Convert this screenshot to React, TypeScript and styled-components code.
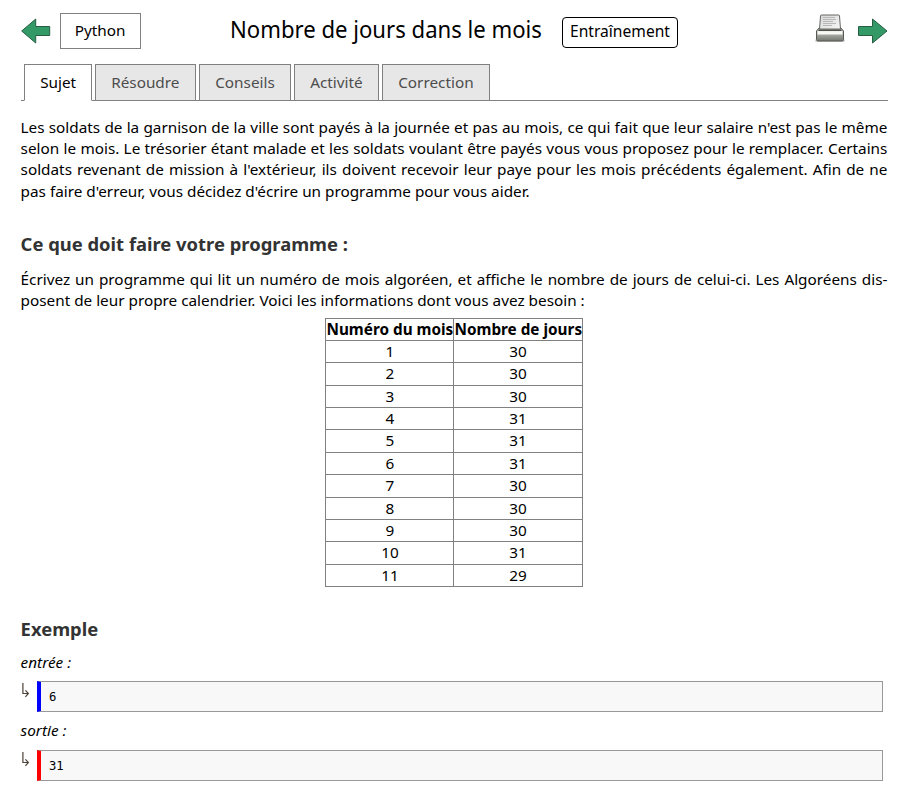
import React from "react";
import styled, { createGlobalStyle } from "styled-components";

const GlobalStyle = createGlobalStyle`
  * { box-sizing: border-box; }
  body {
    margin: 0;
    background: #fff;
    color: #000;
    font: 15.3px/21.32px "Noto Sans", "Open Sans", sans-serif;
  }
`;

const Page = styled.main`
  width: 907px;
  height: 786px;
  padding: 13px 19.6px 0 20.6px;
  overflow: hidden;
`;

const Header = styled.header`
  display: flex;
  align-items: flex-start;
  height: 51px;
`;

const ArrowLink = styled.a`
  display: block;
  width: 30px;
  height: 26px;
  margin-top: 5px;
  svg { display: block; }
`;

const Language = styled.div`
  width: 81px;
  height: 36px;
  margin-left: 9px;
  border: 1px solid #808080;
  line-height: 33px;
  text-align: center;
`;

const Title = styled.h1`
  width: 314px;
  margin: 0 0 0 89px;
  font-size: 24px;
  font-weight: 400;
  line-height: 31px;
  white-space: nowrap;
  span {
    display: inline-block;
    transform: scaleX(0.922);
    transform-origin: 0 50%;
  }
`;

const Badge = styled.div`
  width: 116px;
  height: 31px;
  margin: 4px 0 0 18px;
  border: 1px solid #000;
  border-radius: 4px;
  font-size: 16px;
  line-height: 27px;
  padding-left: 7.5px;
  white-space: nowrap;
  span {
    display: inline-block;
    transform: scaleX(0.975);
    transform-origin: 0 50%;
  }
`;

const Actions = styled.div`
  display: flex;
  gap: 13px;
  margin-left: auto;
  margin-right: -0.6px;
`;

const PrinterIcon = styled.svg`
  display: block;
`;

const Tabs = styled.nav`
  display: flex;
  gap: 3px;
  height: 37px;
  padding-left: 3px;
  width: 867px;
  box-shadow: inset 0 -1px #808080;
`;

const Tab = styled.a<{ $active?: boolean; $width: number }>`
  width: ${(p) => p.$width}px;
  height: 37px;
  border: 1px solid #808080;
  border-bottom-color: ${(p) => (p.$active ? "#fff" : "#808080")};
  background: ${(p) => (p.$active ? "#fff" : "#e7e7e7")};
  color: ${(p) => (p.$active ? "#000" : "#4d4d4d")};
  line-height: 35px;
  padding-left: 15.6px;
  white-space: nowrap;
`;

const Paragraph = styled.p`
  margin: 0;
  text-align: justify;
  hyphens: manual;
`;

const Intro = styled(Paragraph)`
  margin-top: 15.6px;
`;

const Heading = styled.h2<{ $top: number; $bottom: number }>`
  margin: ${(p) => p.$top}px 0 ${(p) => p.$bottom}px;
  color: #333;
  font-size: 18.4px;
  font-weight: 700;
  line-height: 26px;
`;

const Table = styled.table`
  margin: 6.2px auto 0;
  width: 257.4px;
  border-collapse: collapse;
  table-layout: fixed;
  th, td {
    height: 22.36px;
    padding: 0;
    border: 1px solid #808080;
    text-align: center;
    line-height: 21.32px;
    white-space: nowrap;
  }
`;

const Label = styled.div<{ $top: number }>`
  margin-top: ${(p) => p.$top}px;
  font-style: italic;
  line-height: 21px;
`;

const Sample = styled.div<{ $top: number }>`
  display: flex;
  margin-top: ${(p) => p.$top}px;
  padding-right: 4.4px;
`;

const Hook = styled.span`
  width: 16px;
  height: 31px;
  svg { display: block; }
`;

const Code = styled.pre<{ $color: string }>`
  flex: 1;
  height: 31px;
  margin: 0;
  padding-left: 8.4px;
  border: 1px solid #999;
  border-left: 4px solid ${(p) => p.$color};
  background: #f8f8f8;
  font: 12.24px/31px "DejaVu Sans Mono", monospace;
`;

const Arrow = ({ right }: { right?: boolean }) => (
  <svg width="30" height="26" viewBox="0 0 30 26">
    <path
      d={right ? "M.5 8.5h14V1L29 13 14.5 25v-7.5H.5z" : "M28.7 8.5H14.7V1L.7 13l14 12v-7.5h14z"}
      fill="#339966"
      stroke="#285d43"
      strokeWidth="1"
    />
  </svg>
);

const Printer = () => (
  <PrinterIcon width="30" height="30" viewBox="0 0 30 30">
    <defs>
      <linearGradient id="body" x1="0" y1="0" x2="0" y2="1">
        <stop offset="0" stopColor="#b4b6b0" />
        <stop offset=".5" stopColor="#a9aba5" />
        <stop offset="1" stopColor="#73756f" />
      </linearGradient>
      <linearGradient id="sheet" x1="0" y1="0" x2="1" y2="1">
        <stop offset="0" stopColor="#d6d6d6" />
        <stop offset="1" stopColor="#f6f6f6" />
      </linearGradient>
    </defs>
    <rect x="0" y="26" width="30" height="3" rx="1.5" fill="#d5d5d5" />
    <path d="M4.5 14.5h21l3 3.5v8.5a1.5 1.5 0 0 1-1.5 1.5H3a1.5 1.5 0 0 1-1.500-1.500V18z" fill="url(#body)" stroke="#585a55" />
    <path d="M5.5 3a1 1 0 0 1 1-1h17a1 1 0 0 1 1 1l1 13h-21z" fill="url(#sheet)" stroke="#666863" />
    <path d="M8 4.5h12M8 6.5h13M8 8.5h10M8 10.5h13M8 12.5h9" stroke="#b8b8b8" />
    <path d="M2.5 18h25v3.5h-25z" fill="#f7f7f4" />
    <path d="M3.5 17.300h23" stroke="#4f514c" strokeWidth="1.5" />
  </PrinterIcon>
);

const HookArrow = () => (
  <svg width="9" height="18" viewBox="0 0 9 18">
    <path d="M1.9 2v10.5h5M4.4 9.3l3 3.2-3 3.3" fill="none" stroke="#4d4338" strokeWidth="1.2" />
  </svg>
);

const tabs = [
  { name: "Sujet", width: 68 },
  { name: "Résoudre", width: 101 },
  { name: "Conseils", width: 92 },
  { name: "Activité", width: 85 },
  { name: "Correction", width: 108 },
];

const days = [30, 30, 30, 31, 31, 31, 30, 30, 30, 31, 29];

export default function App() {
  return (
    <>
      <GlobalStyle />
      <Page>
        <Header>
          <ArrowLink><Arrow /></ArrowLink>
          <Language>Python</Language>
          <Title><span>Nombre de jours dans le mois</span></Title>
          <Badge><span>Entraînement</span></Badge>
          <Actions>
            <Printer />
            <ArrowLink><Arrow right /></ArrowLink>
          </Actions>
        </Header>
        <Tabs>
          {tabs.map((t, i) => (
            <Tab key={t.name} $width={t.width} $active={i === 0}>{t.name}</Tab>
          ))}
        </Tabs>
        <Intro>
          Les soldats de la garnison de la ville sont payés à la journée et pas au mois, ce qui fait que leur salaire
          n'est pas le même selon le mois. Le trésorier étant malade et les soldats voulant être payés vous vous
          proposez pour le remplacer. Certains soldats revenant de mission à l'extérieur, ils doivent recevoir leur
          paye pour les mois précédents également. Afin de ne pas faire d'erreur, vous décidez d'écrire un programme
          pour vous aider.
        </Intro>
        <Heading $top={29} $bottom={12}>Ce que doit faire votre programme :</Heading>
        <Paragraph>
          Écrivez un programme qui lit un numéro de mois algoréen, et affiche le nombre de jours de celui-ci. Les
          Algoréens dis&shy;posent de leur propre calendrier. Voici les informations dont vous avez besoin :
        </Paragraph>
        <Table>
          <thead>
            <tr><th>Numéro du mois</th><th>Nombre de jours</th></tr>
          </thead>
          <tbody>
            {days.map((d, i) => (
              <tr key={i}><td>{i + 1}</td><td>{d}</td></tr>
            ))}
          </tbody>
        </Table>
        <Heading $top={28.8} $bottom={10}>Exemple</Heading>
        <Label $top={0}>entrée :</Label>
        <Sample $top={8}>
          <Hook><HookArrow /></Hook>
          <Code $color="#0000ff">6</Code>
        </Sample>
        <Label $top={8}>sortie :</Label>
        <Sample $top={9}>
          <Hook><HookArrow /></Hook>
          <Code $color="#ff0000">31</Code>
        </Sample>
      </Page>
    </>
  );
}
